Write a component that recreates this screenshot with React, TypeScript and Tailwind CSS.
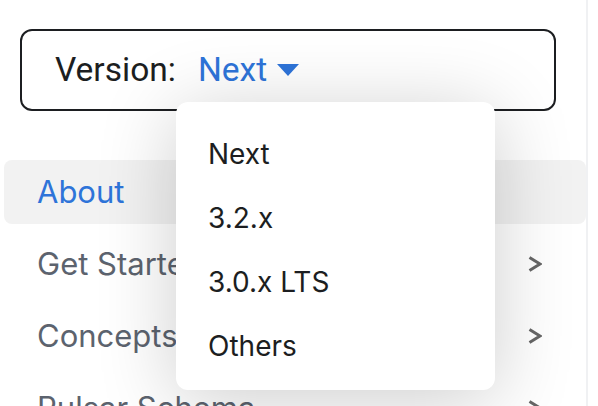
const versions = ["Next", "3.2.x", "3.0.x LTS", "Others"];
const items = [
  { label: "About", active: true, arrow: false },
  { label: "Get Started", arrow: true },
  { label: "Concepts and Architecture", arrow: true },
  { label: "Pulsar Schema", arrow: true },
];

export default function App() {
  return (
    <div className="relative w-[598px] h-[406px] overflow-hidden bg-white" style={{ fontFamily: "Inter, 'Noto Sans', sans-serif" }}>
      <div className="w-[588px] h-full border-r-2 border-[#f0f1f3]">
        <div className="pt-[29px] pl-[20px] pr-[30px]">
          <div className="h-[82px] border-2 border-[#1c1e21] rounded-[12px] flex items-center pl-[33px] gap-[22px] font-['Roboto',sans-serif] text-[33.5px] leading-none">
            <span className="text-[#1c1e21]">Version:</span>
            <span className="flex items-center gap-[10px] text-[#2e74d9]">
              Next
              <svg width="22" height="12" viewBox="0 0 22 12"><path d="M0 0h22L11 12z" fill="#2e74d9" /></svg>
            </span>
          </div>
        </div>
        <ul className="mt-[49px] pl-[4px] flex flex-col gap-[8px]">
          {items.map((it) => (
            <li
              key={it.label}
              className={`h-[64px] rounded-[8px] flex items-center pl-[33px] pr-[44px] text-[31px] whitespace-nowrap ${it.active ? "bg-[#f2f2f2] text-[#2e74d9]" : "text-[#5c636e]"}`}
            >
              <span className="flex-1 overflow-hidden">{it.label}</span>
              {it.arrow && (
                <svg width="14" height="16" viewBox="0 0 14 16" className="shrink-0">
                  <polyline points="1.5,1.5 12,8 1.5,14.5" fill="none" stroke="#666" strokeWidth="3" />
                </svg>
              )}
            </li>
          ))}
        </ul>
      </div>

      <div className="absolute left-[176px] top-[102px] w-[319px] h-[288px] bg-white rounded-[12px] shadow-[0_10px_80px_rgba(0,0,0,0.2)] pt-[20px]">
        {versions.map((v) => (
          <div key={v} className="h-[64px] flex items-center pl-[32px] text-[28px] text-[#1c1e21]">
            {v}
          </div>
        ))}
      </div>
    </div>
  );
}
